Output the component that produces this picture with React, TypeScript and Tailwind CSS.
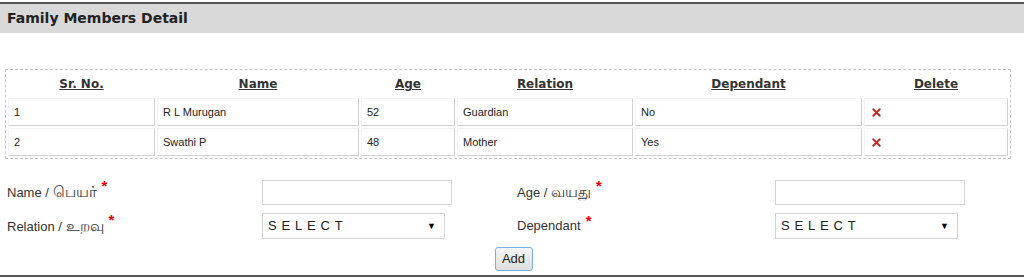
import { X } from 'lucide-react';

type Member = { sr: number; name: string; age: number; relation: string; dependant: string };

const MEMBERS: Member[] = [
  { sr: 1, name: 'R L Murugan', age: 52, relation: 'Guardian', dependant: 'No' },
  { sr: 2, name: 'Swathi P', age: 48, relation: 'Mother', dependant: 'Yes' },
];

const HEADERS = [
  { label: 'Sr. No.', w: 'w-[147px]' },
  { label: 'Name', w: 'w-[202px]' },
  { label: 'Age', w: 'w-[94px]' },
  { label: 'Relation', w: 'w-[176px]' },
  { label: 'Dependant', w: 'w-[227px]' },
  { label: 'Delete', w: 'w-[144px]' },
];

function Label({ text, tamil }: { text: string; tamil?: string }) {
  return (
    <label className="text-[13px] text-[#333] flex items-start">
      <span>
        {text}
        {tamil && <span className="text-[15px]">{tamil}</span>}
      </span>
      <span className="text-[#e00] text-[15px] font-bold leading-none ml-[5px] -mt-[3px]">*</span>
    </label>
  );
}

function TextBox() {
  return <input className="w-[190px] h-[25px] border border-[#d5d5d5] bg-white px-1 text-[13px] outline-none" />;
}

function SelectBox({ w }: { w: string }) {
  return (
    <div className={`${w} h-[26px] border border-[#d5d5d5] bg-white flex items-center justify-between pl-[5px] pr-[8px]`}>
      <span className="text-[13px] tracking-[4.8px] text-[#222]">SELECT</span>
      <span className="text-[9px] text-black leading-none">▼</span>
    </div>
  );
}

function Cell({ children }: { children: React.ReactNode }) {
  return (
    <td className="h-[28px] border border-t-[#f4f4f4] border-l-[#f4f4f4] border-r-[#d2d2d2] border-b-[#d2d2d2] pl-[5px] text-[11px] text-[#222] align-middle">
      {children}
    </td>
  );
}

export default function App() {
  return (
    <div className="w-[1024px] h-[278px] bg-white flex flex-col font-['Liberation_Sans',Arial,sans-serif] text-[#333]">
      {/* Header */}
      <div className="mt-[2px] border-t-2 border-[#555] bg-[#d9d9d9] h-[31px] flex items-center pl-[7px] font-['DejaVu_Sans',sans-serif] font-bold text-[14px] text-[#222]">
        Family Members Detail
      </div>

      {/* Members table */}
      <div className="mt-[36px] ml-[5px] w-[1006px] border border-dashed border-[#c8c8c8]">
        <table className="table-fixed w-full border-separate border-spacing-[2px]">
          <thead>
            <tr>
              {HEADERS.map(h => (
                <th key={h.label} className={`${h.w} h-[24px] font-['DejaVu_Sans',sans-serif] font-bold text-[12px] text-[#333] underline`}>
                  {h.label}
                </th>
              ))}
            </tr>
          </thead>
          <tbody>
            {MEMBERS.map(m => (
              <tr key={m.sr}>
                <Cell>{m.sr}</Cell>
                <Cell>{m.name}</Cell>
                <Cell>{m.age}</Cell>
                <Cell>{m.relation}</Cell>
                <Cell>{m.dependant}</Cell>
                <Cell>
                  <X size={13} strokeWidth={3.5} className="text-[#c62828]" />
                </Cell>
              </tr>
            ))}
          </tbody>
        </table>
      </div>

      {/* Form */}
      <div className="mt-[21px] pl-[7px] grid grid-cols-[255px_255px_258px_1fr] gap-y-[8px] items-center">
        <Label text="Name / " tamil="பெயர்" />
        <TextBox />
        <Label text="Age / " tamil="வயது" />
        <TextBox />
        <Label text="Relation / " tamil="உறவு" />
        <SelectBox w="w-[183px]" />
        <Label text="Dependant" />
        <SelectBox w="w-[183px]" />
      </div>

      <div className="flex justify-center mt-[8px] pl-[3px]">
        <button className="w-[38px] h-[24px] rounded-[3px] border border-[#7eaee0] bg-gradient-to-b from-[#f6f6f6] to-[#dedede] text-[13px] text-[#222]">
          Add
        </button>
      </div>

      <div className="mt-auto mb-[1px] h-[2px] bg-[#555]" />
    </div>
  );
}
